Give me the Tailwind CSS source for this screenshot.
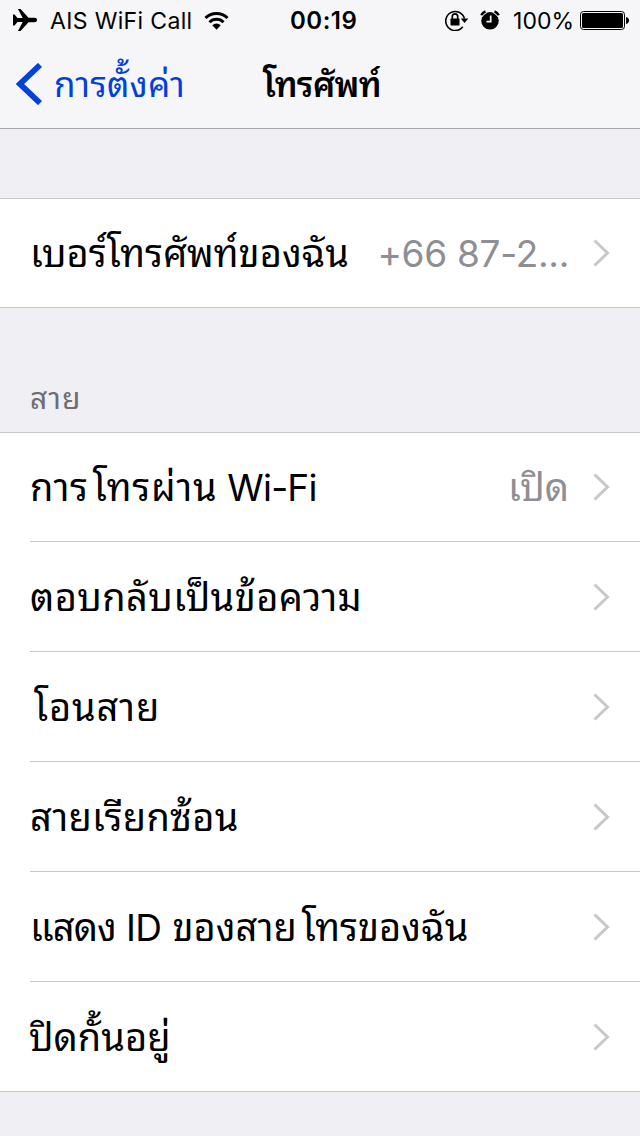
<!DOCTYPE html>
<html lang="th">
<head>
  <meta charset="UTF-8">
  <meta name="viewport" content="width=device-width, initial-scale=1.0">
  <title>โทรศัพท์</title>
  <script src="https://cdn.jsdelivr.net/npm/@tailwindcss/browser@4"></script>
</head>

<body class="w-[640px] h-[1136px] overflow-hidden bg-[#efeff4] text-black font-['Inter','Noto_Sans_Thai_Looped','Loma',sans-serif]">
  <header class="h-[129px] bg-[#f6f6f8] border-b border-[#a7a7aa]">
    <!-- Status bar -->
    <div class="flex items-center h-10 pl-3 pr-2.5 text-[23px] leading-10 whitespace-nowrap">
      <div class="flex items-center w-[278px] shrink-0">
        <svg class="shrink-0 w-[25px] h-6" viewBox="0 0 25 24"><path d="M1 6.500h1.500L5.500 10h5.200L6 1h2.600L16.500 9.800H22.500c1.700 0 2.500.9 2.500 2.200s-.8 2.200-2.500 2.200h-6L8.600 23H6l4.700-9H5.500L2.500 17.500H1z"/></svg>
        <span class="ml-[13px] mt-0.5 tracking-[0.35px]">AIS WiFi Call</span>
        <svg class="ml-[11px] shrink-0 w-[25px] h-[19px]" viewBox="0 0 25 19"><g fill="none" stroke="#000" stroke-width="3"><path d="M1.500 7a15.500 15.500 0 0 1 22 0"/><path d="M5.500 11.200a9.900 9.900 0 0 1 14 0"/></g><path d="M8.300 14.300a6 6 0 0 1 8.400 0L12.500 18.700z"/></svg>
      </div>
      <div class="mt-0.5 text-[24px] font-semibold tracking-[0.5px]">00:19</div>
      <div class="flex items-center ml-auto">
        <svg class="w-6 h-[22px]" viewBox="0 0 24 22"><path d="M17.800 17.800A9.500 9.500 0 1 1 19.400 9.500" fill="none" stroke="#000" stroke-width="1.600"/><path d="M15.800 9.500h7.500L19.500 14z"/><rect x="5.500" y="9.500" width="9" height="7" rx=".7"/><path d="M7.300 10V7.500a2.700 2.700 0 0 1 5.400 0V10" fill="none" stroke="#000" stroke-width="1.700"/></svg>
        <svg class="ml-[11px] w-5 h-5" viewBox="0 0 20 20"><circle cx="10" cy="10.800" r="8.800"/><path d="M1.200 5.200a7.500 7.500 0 0 1 4.300-3.700M14.500 1.500a7.500 7.500 0 0 1 4.300 3.700" fill="none" stroke="#000" stroke-width="2.400"/><path d="M2.200 6.900a8.500 8.500 0 0 1 4.500-4M13.300 2.900a8.500 8.500 0 0 1 4.500 4" fill="none" stroke="#f6f6f8" stroke-width=".8"/><path d="M10.700 5.500v6.200H6.500" fill="none" stroke="#f6f6f8" stroke-width="1.700"/></svg>
        <span class="ml-[13px] mt-0.5">100%</span>
        <svg class="ml-1.5 w-[50px] h-[19px]" viewBox="0 0 50 19"><rect x=".5" y=".5" width="44" height="18" rx="3" fill="none" stroke="#000"/><rect x="2" y="2" width="41" height="15" rx="1.500"/><path d="M46 6c2 .5 3 1.500 3 3.500S48 12.500 46 13z"/></svg>
      </div>
    </div>

    <!-- Navigation bar -->
    <nav class="flex items-center h-[88px] pl-4 whitespace-nowrap">
      <a href="#" class="flex items-center w-[246px] text-[#0040dd]">
        <svg class="shrink-0 w-[27px] h-[42px]" viewBox="0 0 27 42"><path d="M24 2L4 21l20 19" fill="none" stroke="currentColor" stroke-width="5.800"/></svg>
        <span class="ml-[11px] text-[35px] tracking-[0.2px]">การตั้งค่า</span>
      </a>
      <h1 class="ml-px text-[34px] font-semibold tracking-[-0.7px]">โทรศัพท์</h1>
    </nav>
  </header>

  <main class="pt-[69px] text-[38px] leading-[109px] whitespace-nowrap">
    <section class="h-[110px] flex bg-white border-y border-[#c8c7cc] pl-[30px] pr-[30px]">
      <a href="#" class="flex-1 flex items-center">
        <span>เบอร์โทรศัพท์ของฉัน</span>
        <span class="ml-auto text-[37px] tracking-[-0.3px] text-[#8e8e93]">+66 87-2...</span>
        <svg class="ml-6 w-[17px] h-7" viewBox="0 0 17 28"><path d="M1.500 1.500L14.500 14l-13 12.500" fill="none" stroke="#c7c7cc" stroke-width="3"/></svg>
      </a>
    </section>

    <h2 class="h-[124px] pt-[70px] pl-[30px] text-[30px] leading-[40px] tracking-[1px] text-[#6d6d72]">สาย</h2>

    <ul class="bg-white border-y border-[#c8c7cc] pl-[30px] divide-y divide-[#c8c7cc]">
      <li class="h-[109px] flex items-center pr-[30px]">
        <span class="tracking-[0.6px]">การ</span>
        <span class="ml-1 tracking-[0.7px]">โทรผ่าน</span>
        <span class="ml-2.5 text-[37px] tracking-[-0.8px]">Wi-Fi</span>
        <span class="ml-auto text-[#8e8e93]">เปิด</span>
        <svg class="ml-6 w-[17px] h-7" viewBox="0 0 17 28"><path d="M1.500 1.500L14.500 14l-13 12.500" fill="none" stroke="#c7c7cc" stroke-width="3"/></svg>
      </li>
      <li class="h-[110px] flex items-center justify-between pr-[30px]">
        <span class="pt-0.5 tracking-[0.4px]">ตอบกลับเป็นข้อความ</span>
        <svg class="w-[17px] h-7" viewBox="0 0 17 28"><path d="M1.500 1.500L14.500 14l-13 12.500" fill="none" stroke="#c7c7cc" stroke-width="3"/></svg>
      </li>
      <li class="h-[110px] flex items-center justify-between pr-[30px]">
        <span class="pt-0.5 pl-1 tracking-[0.8px]">โอนสาย</span>
        <svg class="w-[17px] h-7" viewBox="0 0 17 28"><path d="M1.500 1.500L14.500 14l-13 12.500" fill="none" stroke="#c7c7cc" stroke-width="3"/></svg>
      </li>
      <li class="h-[110px] flex items-center justify-between pr-[30px]">
        <span class="pt-0.5 tracking-[0.3px]">สายเรียกซ้อน</span>
        <svg class="w-[17px] h-7" viewBox="0 0 17 28"><path d="M1.500 1.500L14.500 14l-13 12.500" fill="none" stroke="#c7c7cc" stroke-width="3"/></svg>
      </li>
      <li class="h-[110px] flex items-center pr-[30px]">
        <span class="pt-0.5 tracking-[-0.9px]">แสดง</span>
        <span class="pt-0.5 ml-2.5 text-[37px] tracking-[-0.5px]">ID</span>
        <span class="pt-0.5 ml-[11px]">ของสาย</span>
        <span class="pt-0.5 ml-[5px]">โทรของฉัน</span>
        <svg class="ml-auto w-[17px] h-7" viewBox="0 0 17 28"><path d="M1.500 1.500L14.500 14l-13 12.500" fill="none" stroke="#c7c7cc" stroke-width="3"/></svg>
      </li>
      <li class="h-[109px] flex items-center justify-between pr-[30px]">
        <span class="pt-0.5 -ml-px">ปิดกั้นอยู่</span>
        <svg class="w-[17px] h-7" viewBox="0 0 17 28"><path d="M1.500 1.500L14.500 14l-13 12.500" fill="none" stroke="#c7c7cc" stroke-width="3"/></svg>
      </li>
    </ul>
  </main>
</body>
</html>
